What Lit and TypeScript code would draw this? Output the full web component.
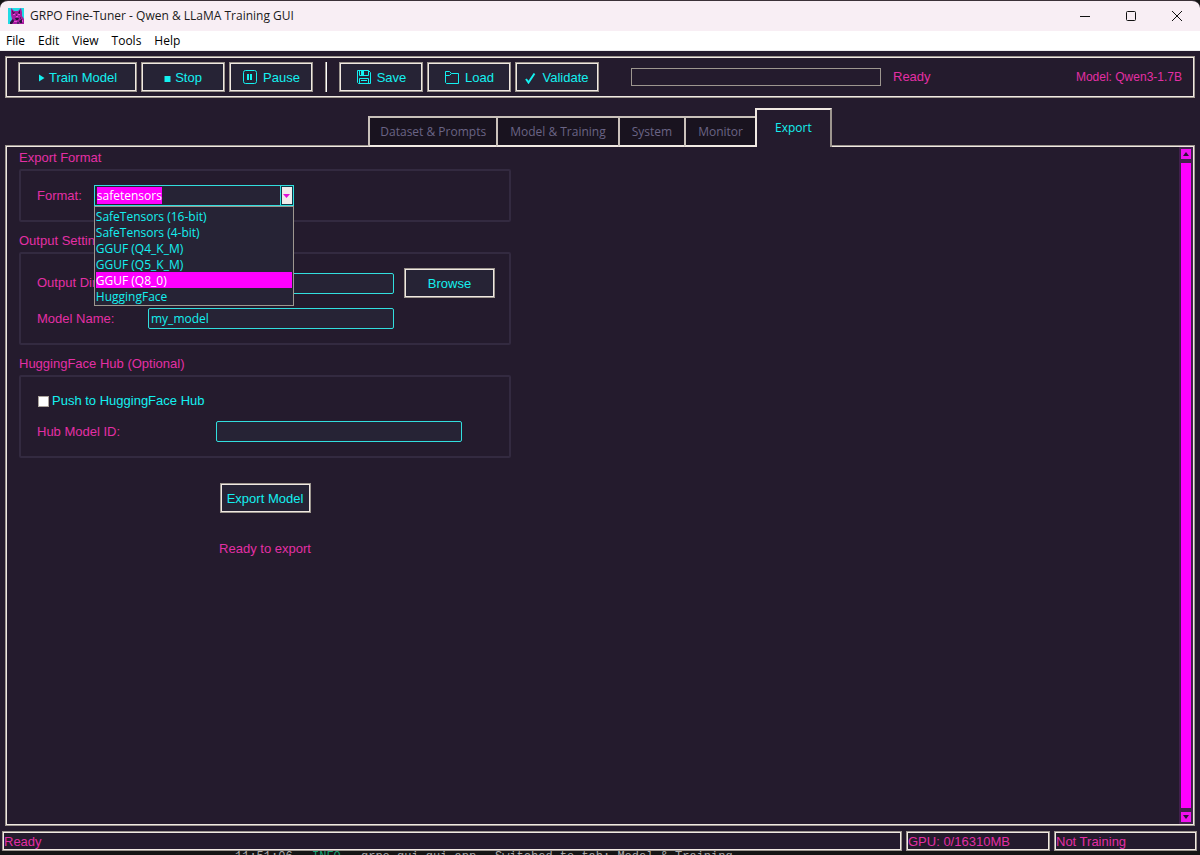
import { LitElement, html, css, svg } from "lit";
import { customElement, state, query } from "lit/decorators.js";
import { classMap } from "lit/directives/class-map.js";

const icons: Record<string, unknown> = {
  play: html`<svg class="icon small" viewBox="0 0 7 8"><path d="M1 0.5 L6.5 4 L1 7.5 Z" fill="currentColor"/></svg>`,
  stop: html`<svg class="icon small" viewBox="0 0 7 8"><path d="M0.5 2 H6.5 V8 H0.5 Z" fill="currentColor"/></svg>`,
  pause: html`<svg class="icon" viewBox="0 0 15 15"><rect x="1.5" y="0.5" width="13" height="13" rx="2" fill="none" stroke="currentColor"/><path d="M5 4 h2 v6 h-2z M8 4 h2 v6 h-2z" fill="currentColor"/></svg>`,
  save: html`<svg class="icon" viewBox="0 0 15 15" fill="none" stroke="currentColor"><path d="M1.5 0.5 H12.5 L14.5 2.5 V13.5 H2.5 L1.5 12.5 Z M3.5 0.5 V5.5 H12.5 V0.5 M3.5 13.5 V8.5 H12.5 V13.5 M5 10.5 H11"/><path d="M5 1 H8 V5 H5Z" fill="currentColor" stroke="none"/></svg>`,
  load: html`<svg class="icon" viewBox="0 0 15 15" fill="none" stroke="currentColor"><path d="M1.5 1.5 H5.5 L7.5 3.5 H14.5 V13.5 H2.5 L1.5 12.5 Z M1.5 5.5 H5.5 L7.5 3.5"/></svg>`,
  check: html`<svg class="icon check" viewBox="0 0 11 12"><path d="M1 7 L3.5 10.5 L9.5 1.5" fill="none" stroke="currentColor" stroke-width="2"/></svg>`,
};

@customElement("app-root")
export class AppRoot extends LitElement {
  @state() private tab = "Export";
  @state() private target = "GGUF (Q8_0)";
  @query("#format") private formatInput!: HTMLInputElement;

  private tabs = ["Dataset & Prompts", "Model & Training", "System", "Monitor", "Export"];
  private menus = ["File", "Edit", "View", "Tools", "Help"];
  private formats = [
    "SafeTensors (16-bit)",
    "SafeTensors (4-bit)",
    "GGUF (Q4_K_M)",
    "GGUF (Q5_K_M)",
    "GGUF (Q8_0)",
    "HuggingFace",
  ];

  static styles = css`
    :host {
      --bg: #241b2d;
      --field: #262335;
      --pink: #e32fa5;
      --cyan: #14f0f0;
      --edge: #9d968f;
      --light: #f0e9e2;
      --ui: "Open Sans", "Noto Sans", sans-serif;
      display: flex;
      flex-direction: column;
      height: 100vh;
      overflow: hidden;
      background: #151515;
      color: var(--pink);
      font: 13px/16px "Liberation Sans", Arial, sans-serif;
    }
    * { box-sizing: border-box; }
    button, input, select { font: inherit; color: inherit; margin: 0; }
    .window {
      flex: 1;
      min-height: 0;
      display: flex;
      flex-direction: column;
      background: var(--bg);
      border-top: 1px solid #3b3138;
      border-radius: 8px 8px 3px 3px;
      overflow: hidden;
    }
    .titlebar {
      display: flex;
      align-items: center;
      height: 30px;
      padding-left: 8px;
      gap: 6px;
      background: #f8eef4;
      color: #1b1b1b;
      font: 12px/16px var(--ui);
    }
    .titlebar h1 { flex: 1; margin: 0; font: inherit; }
    .logo { width: 16px; height: 16px; display: block; }
    .caption { display: flex; }
    .caption button {
      width: 46px;
      height: 30px;
      border: 0;
      padding: 0;
      background: none;
      display: grid;
      place-items: center;
    }
    .caption svg { width: 12px; height: 12px; fill: none; stroke: #111; }
    .menubar {
      display: flex;
      gap: 1px;
      height: 20px;
      background: #fff;
      border-bottom: 1px solid #eee;
      color: #000;
    }
    .menubar button {
      border: 0;
      background: none;
      padding: 0 6px;
      font: 12px/18px var(--ui);
    }
    .ridge {
      border: 1px solid var(--edge);
      box-shadow: inset 0 0 0 1px var(--light);
    }
    .btn {
      display: flex;
      align-items: center;
      justify-content: center;
      gap: 4px;
      height: 30px;
      padding: 1px 0 0;
      min-width: 84px;
      background: var(--field);
      color: var(--cyan);
      border-radius: 0;
    }
    .btn.wide { min-width: 119px; }
    .btn.mid { width: 91px; }
    .icon { width: 15px; height: 15px; margin-right: 2px; }
    .icon.small { width: 7px; height: 8px; margin: 0; }
    .icon.check { width: 11px; height: 12px; }
    .toolbar {
      display: flex;
      align-items: center;
      gap: 4px;
      height: 42px;
      margin: 5px 5px 0;
      padding: 0 12px;
    }
    .rule { width: 2px; height: 30px; margin: 0 8px; background: linear-gradient(90deg, var(--edge) 50%, #fff 50%); }
    .progress {
      width: 250px;
      height: 18px;
      margin: 0 8px 0 28px;
      appearance: none;
      border: 1px solid var(--edge);
      background: transparent;
    }
    .progress::-webkit-progress-bar { background: transparent; }
    .grow { flex: 1; }
    .model { font-size: 12px; }
    .tabs {
      display: flex;
      align-items: flex-end;
      justify-content: center;
      height: 39px;
      margin-top: 10px;
      position: relative;
      z-index: 1;
    }
    .tab {
      height: 31px;
      padding: 0 12px;
      border: 0;
      border-top: 2px solid #c9c1ba;
      border-left: 2px solid #c9c1ba;
      border-bottom: 2px solid var(--light);
      background: #19131f;
      color: #6a6485;
      font: 12px/26px var(--ui);
    }
    .tab:first-child { padding: 0 10px; }
    .tab.active {
      height: 39px;
      padding: 0 18px 2px;
      border-color: var(--light);
      border-right: 2px solid var(--edge);
      border-bottom: 0;
      background: var(--bg);
      color: var(--cyan);
    }
    .pane {
      flex: 1;
      min-height: 0;
      display: flex;
      margin: -2px 5px 0;
      padding: 1px;
    }
    .content { flex: 1; padding: 3px 12px; min-width: 0; }
    .scroll {
      width: 14px;
      padding: 2px;
      display: flex;
      flex-direction: column;
      gap: 4px;
      background: #42204c;
    }
    .scroll button { height: 10px; padding: 0; border: 0; background: #f010f0; display: grid; place-items: center; }
    .scroll svg { width: 6px; height: 4px; fill: #2c1036; display: block; }
    .thumb { flex: 1; background: #f0f; }
    fieldset { border: 0; margin: 0 0 11px; padding: 0; width: 492px; min-width: 0; }
    legend { padding: 0; height: 19px; line-height: 16px; }
    .group { border: 2px solid #332a40; border-radius: 2px; padding: 14px 16px; }
    .row { display: flex; align-items: center; }
    .combo { position: relative; width: 200px; height: 21px; margin-left: 12px; }
    .entry {
      height: 21px;
      padding: 0 2px;
      border: 1px solid #32dede;
      border-radius: 2px;
      outline: 0;
      background: var(--field);
      color: var(--cyan);
      font: 12px/16px var(--ui);
    }
    .combo .entry { display: block; width: 100%; border-radius: 0; padding: 0 16px 0 2px; }
    .combo .entry::selection { background: #f0f; color: #fff; }
    .drop {
      position: absolute;
      right: 0;
      top: 0;
      width: 14px;
      height: 21px;
      padding: 0;
      border: 1px solid #32dede;
      background: #f0ebea;
      box-shadow: inset 0 0 0 1px #103a48;
      display: grid;
      place-items: center;
    }
    .drop svg { width: 7px; height: 4px; fill: #e010d8; display: block; }
    .list {
      position: absolute;
      z-index: 2;
      left: 0;
      top: 21px;
      width: 100%;
      height: 100px;
      padding: 1px;
      border: 1px solid var(--edge);
      border-radius: 0;
      outline: 0;
      overflow: hidden;
      background: var(--field);
      color: var(--cyan);
      font: 12px/16px var(--ui);
    }
    .list option { height: 16px; min-height: 16px; padding: 0; line-height: 16px; color: var(--cyan); }
    .list option:checked { background: #f0f linear-gradient(#f0f, #f0f); color: #fff; }
    .output { display: grid; grid-template-columns: 111px 246px 91px; align-items: center; row-gap: 10px; }
    .output .btn { margin-left: 10px; }
    .hub { display: grid; grid-template-columns: 179px 246px; align-items: center; row-gap: 12px; padding-top: 16px; }
    .tick { grid-column: 1 / -1; display: flex; align-items: center; gap: 3px; color: var(--cyan); }
    .tick input { appearance: none; width: 11px; height: 11px; margin: 0 0 0 1px; background: #fff; border: 1px solid #aaa39c; }
    .tick input:checked { background: #f0f; }
    .actions { width: 492px; display: flex; flex-direction: column; align-items: center; gap: 28px; padding-top: 14px; }
    .actions p { margin: 0; }
    .status { display: flex; gap: 4px; padding: 5px 3px 0 2px; }
    .status div { height: 20px; padding: 1px 1px 0; line-height: 18px; }
    .status .gpu { width: 144px; }
    .status .state { width: 143px; }
    .console {
      display: grid;
      grid-template-columns: 77px 49px 134px 1fr;
      height: 4px;
      padding-left: 235px;
      overflow: hidden;
      color: #a8a8a8;
      font: 12px/12px "Liberation Mono", monospace;
      white-space: nowrap;
    }
    .console b { font-weight: 400; color: #14a070; }
  `;

  protected firstUpdated() {
    this.formatInput.focus();
    this.formatInput.select();
  }

  private tool(icon: string, label: string, wide = false) {
    return html`<button class=${classMap({ btn: true, ridge: true, wide })}>${icons[icon]}${label}</button>`;
  }

  private arrow(up: boolean) {
    return html`<svg viewBox="0 0 6 4">${up ? svg`<path d="M0 4 L3 0 L6 4Z"/>` : svg`<path d="M0 0 L3 4 L6 0Z"/>`}</svg>`;
  }

  render() {
    return html`
      <div class="window">
        <header class="titlebar">
          <svg class="logo" viewBox="0 0 16 16">
            <path d="M0 0H16V16H0Z" fill="#21dbe5"/>
            <path d="M3 0L6 3H10L13 0L14 4V8L16 11V16H2L4 11L3 7Z" fill="#a61c9f"/>
            <path d="M4 2L6 5L5 7ZM12 2V6L10 5ZM7 10H11L10 12H8ZM2 14L5 11L6 13L4 16H2ZM11 13L14 11V15H12Z" fill="#28133e"/>
            <path d="M5 6H7V7H5ZM10 6H12V7H10ZM8 8H10V9H8ZM6 13H9V14H6ZM14 12H15V14H14Z" fill="#e94ad8"/>
            <path d="M6 4H7V5H6ZM8 6H9V8H8ZM12 9H13V11H12ZM9 14H11V16H9Z" fill="#56206e"/>
          </svg>
          <h1>GRPO Fine-Tuner - Qwen &amp; LLaMA Training GUI</h1>
          <div class="caption">
            <button aria-label="Minimize"><svg viewBox="0 0 12 12"><path d="M1 6.5H11"/></svg></button>
            <button aria-label="Maximize"><svg viewBox="0 0 12 12"><rect x="1.5" y="1.5" width="9" height="9" rx="1"/></svg></button>
            <button aria-label="Close"><svg viewBox="0 0 12 12"><path d="M1 1L11 11M11 1L1 11"/></svg></button>
          </div>
        </header>
        <nav class="menubar">${this.menus.map((m) => html`<button>${m}</button>`)}</nav>

        <div class="toolbar ridge">
          ${this.tool("play", "Train Model", true)} ${this.tool("stop", "Stop")} ${this.tool("pause", "Pause")}
          <span class="rule"></span>
          ${this.tool("save", "Save")} ${this.tool("load", "Load")} ${this.tool("check", "Validate")}
          <progress class="progress" value="0" max="100" aria-label="Training progress"></progress>
          <span class="grow">Ready</span>
          <span class="model">Model: Qwen3-1.7B</span>
        </div>

        <div class="tabs" role="tablist">
          ${this.tabs.map(
            (t) => html`<button
              role="tab"
              aria-selected=${t === this.tab}
              class=${classMap({ tab: true, active: t === this.tab })}
              @click=${() => (this.tab = t)}
            >${t}</button>`
          )}
        </div>

        <main class="pane ridge">
          <div class="content">
            <fieldset>
              <legend>Export Format</legend>
              <div class="group row">
                <label for="format">Format:</label>
                <div class="combo">
                  <input id="format" class="entry" role="combobox" aria-expanded="true" aria-controls="formats" value="safetensors" />
                  <button class="drop" aria-label="Show formats" tabindex="-1"><svg viewBox="0 0 7 4"><path d="M0 0H7L3.5 4Z"/></svg></button>
                  <select id="formats" class="list" size="6" aria-label="Formats"
                    @change=${(e: Event) => (this.target = (e.target as HTMLSelectElement).value)}>
                    ${this.formats.map((f) => html`<option ?selected=${f === this.target}>${f}</option>`)}
                  </select>
                </div>
              </div>
            </fieldset>

            <fieldset>
              <legend>Output Settings</legend>
              <div class="group output">
                <label for="dir">Output Directory:</label>
                <input id="dir" class="entry" />
                <button class="btn mid ridge">Browse</button>
                <label for="name">Model Name:</label>
                <input id="name" class="entry" value="my_model" />
              </div>
            </fieldset>

            <fieldset>
              <legend>HuggingFace Hub (Optional)</legend>
              <div class="group hub">
                <label class="tick"><input type="checkbox" />Push to HuggingFace Hub</label>
                <label for="hub">Hub Model ID:</label>
                <input id="hub" class="entry" />
              </div>
            </fieldset>

            <div class="actions">
              <button class="btn mid ridge">Export Model</button>
              <p>Ready to export</p>
            </div>
          </div>
          <div class="scroll">
            <button aria-label="Scroll up">${this.arrow(true)}</button>
            <div class="thumb"></div>
            <button aria-label="Scroll down">${this.arrow(false)}</button>
          </div>
        </main>

        <footer class="status">
          <div class="ridge grow">Ready</div>
          <div class="ridge gpu">GPU: 0/16310MB</div>
          <div class="ridge state">Not Training</div>
        </footer>
      </div>
      <div class="console"><span>11:51:06</span><b>INFO</b><span>grpo_gui.gui.app -</span><span>Switched to tab: Model &amp; Training</span></div>
    `;
  }
}
